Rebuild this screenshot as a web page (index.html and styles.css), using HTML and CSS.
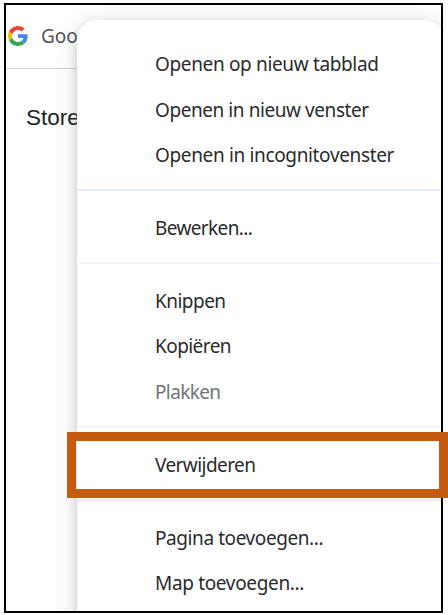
FILE: index.html
```html
<!DOCTYPE html>
<html lang="nl">
<head>
<meta charset="utf-8">
<title>Google Store</title>
<link rel="stylesheet" href="styles.css">
</head>
<body>
<main class="frame">
  <header class="bookmarks">
    <svg class="logo" viewBox="0 0 48 48" aria-hidden="true">
      <path fill="#ea4335" d="M24 9.5c3.54 0 6.71 1.22 9.21 3.6l6.85-6.85C35.9 2.38 30.47 0 24 0 14.62 0 6.51 5.38 2.56 13.22l7.98 6.19C12.43 13.72 17.74 9.5 24 9.5z"/>
      <path fill="#4285f4" d="M46.98 24.55c0-1.57-.15-3.09-.38-4.55H24v9.02h12.94c-.58 2.96-2.26 5.48-4.78 7.18l7.73 6c4.51-4.18 7.09-10.36 7.09-17.65z"/>
      <path fill="#fbbc05" d="M10.53 28.59A14.5 14.5 0 0 1 9.77 24c0-1.6.27-3.14.76-4.59l-7.98-6.19A23.9 23.9 0 0 0 0 24c0 3.88.92 7.54 2.56 10.78z"/>
      <path fill="#34a853" d="M24 48c6.48 0 11.93-2.13 15.89-5.81l-7.73-6c-2.15 1.45-4.92 2.3-8.16 2.3-6.26 0-11.57-4.22-13.47-9.91l-7.98 6.19C6.51 42.62 14.62 48 24 48z"/>
    </svg>
    <span class="bookmark">Google</span>
  </header>
  <div class="store">Store</div>
  <nav class="menu">
    <div class="item i1">Openen op nieuw tabblad</div>
    <div class="item i2">Openen in nieuw venster</div>
    <div class="item i3">Openen in incognitovenster</div>
    <hr class="strong">
    <div class="item i4">Bewerken...</div>
    <hr>
    <div class="item i5">Knippen</div>
    <div class="item i6">Kopiëren</div>
    <div class="item i7 disabled">Plakken</div>
    <hr>
    <div class="item i8">Verwijderen</div>
    <hr class="strong">
    <div class="item i9">Pagina toevoegen...</div>
    <div class="item i10">Map toevoegen...</div>
  </nav>
</main>
<div class="highlight"></div>
</body>
</html>
```
FILE: styles.css
```css
* { box-sizing: border-box; }
body {
  margin: 0;
  padding: 3px 5px 2px 4px;
  height: 615px;
  overflow: hidden;
  position: relative;
  background: #fff;
  font-family: "Noto Sans", "Open Sans", sans-serif;
}
.frame {
  position: relative;
  width: 439px;
  height: 610px;
  border: 2px solid #000;
  overflow: hidden;
}
.bookmarks {
  display: flex;
  align-items: center;
  height: 64px;
  padding: 0 0 2px 2px;
  border-bottom: 1px solid #d2d3d5;
}
.logo { width: 20px; height: 20px; }
.bookmark {
  margin-left: 13px;
  font-size: 19px;
  color: #505358;
}
.store {
  padding: 35px 0 0 20px;
  font: 22.5px/28px "Liberation Sans", sans-serif;
  color: #202124;
}
.menu {
  position: absolute;
  left: 71px;
  top: 15px;
  width: 368px;
  height: 640px;
  padding-top: 21.3px;
  border-radius: 20px;
  background: #fff;
  box-shadow: 0 4px 8px rgba(40, 50, 45, .12), 0 4px 22px rgba(40, 50, 45, .2);
}
.item {
  height: 45.4px;
  padding-left: 78px;
  font-size: 19px;
  line-height: 47.4px;
  white-space: nowrap;
  color: #2a2b2d;
}
.i1 { letter-spacing: -.35px; }
.i2 { letter-spacing: -.43px; }
.i3 { letter-spacing: -.35px; }
.i4 { letter-spacing: -.62px; }
.i5 { letter-spacing: -.52px; }
.i6 { letter-spacing: -.56px; }
.i7 { letter-spacing: -.63px; }
.i8 { letter-spacing: -.57px; }
.i9 { letter-spacing: -.42px; }
.i10 { letter-spacing: -.34px; }
.disabled { color: #727478; }
hr {
  height: 1.5px;
  margin: 12px 0 14.1px;
  border: 0;
  background: #f3f6fe;
}
.strong { background: #e4ecfd; }
.highlight {
  position: absolute;
  left: 67px;
  top: 432px;
  width: 381px;
  height: 66px;
  border: 9px solid #c55a11;
}
```
